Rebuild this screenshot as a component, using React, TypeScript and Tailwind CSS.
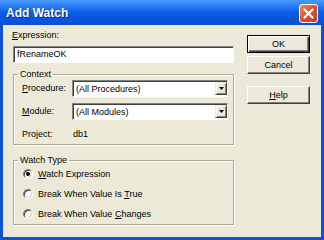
import React from 'react';

const font = { fontFamily: '"Liberation Sans", Arial, sans-serif' };

function U({ children }: { children: React.ReactNode }) {
  return <span className="underline underline-offset-[1px]">{children}</span>;
}

function Button({ children, primary }: { children: React.ReactNode; primary?: boolean }) {
  const edge = primary
    ? 'border border-black shadow-[inset_1px_1px_0_#ffffff,inset_-1px_-1px_0_#404040,inset_-2px_-2px_0_#808080]'
    : 'border border-t-white border-l-white border-r-[#404040] border-b-[#404040] shadow-[inset_-1px_-1px_0_#808080]';
  return (
    <button className={`w-[63px] h-[18px] bg-[#ece9d8] text-[9px] leading-[11px] text-black flex items-center justify-center ${edge}`}>
      {children}
    </button>
  );
}

function Dropdown({ value }: { value: string }) {
  return (
    <div className="flex-1 h-[17px] flex bg-white border border-t-[#808080] border-l-[#808080] border-r-white border-b-white shadow-[inset_1px_1px_0_#404040]">
      <div className="flex-1 pl-[3px] pt-[1px] flex items-center text-[9px] leading-[11px]">{value}</div>
      <div className="w-[12px] my-[1px] bg-[#ece9d8] flex items-center justify-center border border-t-[#ece9d8] border-l-[#ece9d8] border-r-[#404040] border-b-[#404040] shadow-[inset_1px_1px_0_#ffffff,inset_-1px_-1px_0_#808080]">
        <svg width="5" height="3" viewBox="0 0 5 3">
          <path d="M0 0h5L2.5 3z" fill="#000" />
        </svg>
      </div>
    </div>
  );
}

function Radio({ checked, children }: { checked?: boolean; children: React.ReactNode }) {
  return (
    <div className="h-[16px] flex items-center gap-[5px]">
      <div className="w-[10px] h-[10px] rounded-full bg-white border border-t-[#808080] border-l-[#808080] border-r-white border-b-white shadow-[inset_1px_1px_0_#404040,inset_-1px_-1px_0_#d4d0c8] flex items-center justify-center">
        {checked && <div className="w-[4px] h-[4px] rounded-full bg-black" />}
      </div>
      <span className="text-[9px] leading-[11px]">{children}</span>
    </div>
  );
}

const group =
  'm-0 p-0 border border-[#aca899] shadow-[1px_1px_0_#ffffff,inset_1px_1px_0_#ffffff]';

export default function App() {
  return (
    <div className="w-[324px] h-[240px] flex flex-col text-black" style={font}>
      {/* title bar */}
      <div className="h-[25px] flex items-center justify-between pl-[6px] pr-[6px] bg-gradient-to-b from-[#4a9bff] via-[#0a5ce6] to-[#0650d4]">
        <span className="text-white font-bold text-[12px] leading-none [text-shadow:1px_1px_0_#0a2a8a]">Add Watch</span>
        <div className="w-[19px] h-[19px] mt-[1px] rounded-[3px] border border-white bg-gradient-to-br from-[#f08a6a] via-[#e0502a] to-[#c43a14] flex items-center justify-center">
          <svg width="11" height="11" viewBox="0 0 11 11">
            <path d="M1.5 1.5l8 8M9.5 1.5l-8 8" stroke="#fff" strokeWidth="2.2" strokeLinecap="round" />
          </svg>
        </div>
      </div>

      {/* body */}
      <div className="flex-1 flex bg-[#ece9d8] border-x-[3px] border-b-[3px] border-[#0a52dc]">
        <div className="w-[231px] pl-[10px] pt-[5px] flex flex-col">
          <div className="text-[9px] leading-[11px] -ml-[1px]">
            <U>E</U>xpression:
          </div>
          <div className="mt-[5px] h-[17px] flex items-center pl-[3px] bg-white border border-t-[#808080] border-l-[#808080] border-r-white border-b-white shadow-[inset_1px_1px_0_#404040] text-[9px] leading-[11px]">
            fRenameOK
          </div>

          <fieldset className={`mt-[6px] ${group}`}>
            <legend className="ml-[4px] px-[2px] text-[9px] leading-[11px]">Context</legend>
            <div className="pl-[8px] pr-[5px] flex flex-col">
              <div className="flex items-center">
                <span className="w-[50px] text-[9px] leading-[11px]">
                  <U>P</U>rocedure:
                </span>
                <Dropdown value="(All Procedures)" />
              </div>
              <div className="flex items-center mt-[6px]">
                <span className="w-[50px] text-[9px] leading-[11px]">
                  <U>M</U>odule:
                </span>
                <Dropdown value="(All Modules)" />
              </div>
              <div className="flex items-center mt-[9px] mb-[4px]">
                <span className="w-[51px] text-[9px] leading-[11px]">Project:</span>
                <span className="text-[9px] leading-[11px]">db1</span>
              </div>
            </div>
          </fieldset>

          <fieldset className={`mt-[10px] ${group}`}>
            <legend className="ml-[4px] px-[2px] text-[9px] leading-[11px]">Watch Type</legend>
            <div className="pl-[9px] pb-[2px] flex flex-col gap-[4px]">
              <Radio checked>
                <U>W</U>atch Expression
              </Radio>
              <Radio>
                Break When Value Is <U>T</U>rue
              </Radio>
              <Radio>
                Break When Value <U>C</U>hanges
              </Radio>
            </div>
          </fieldset>
        </div>

        <div className="ml-[13px] pt-[10px] flex flex-col">
          <Button primary>OK</Button>
          <div className="mt-[3px]">
            <Button>Cancel</Button>
          </div>
          <div className="mt-[12px]">
            <Button>
              <U>H</U>elp
            </Button>
          </div>
        </div>
      </div>
    </div>
  );
}
